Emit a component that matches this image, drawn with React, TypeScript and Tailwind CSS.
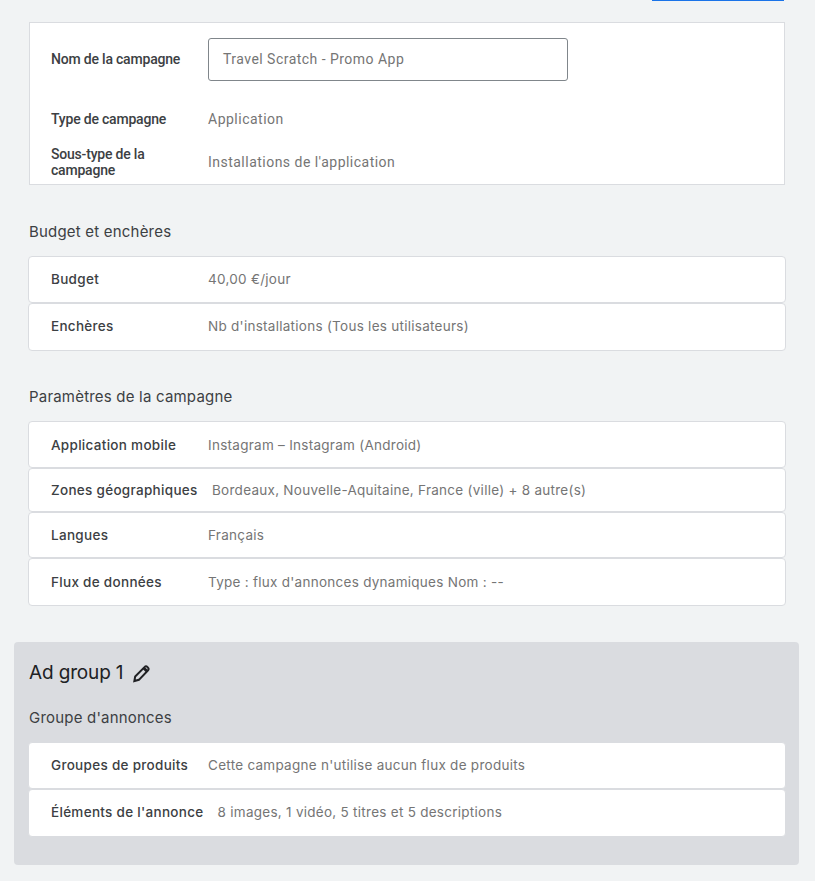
import { ReactNode } from 'react'

const sans = "font-['Inter',sans-serif]"

function Row({ label, value, rowClass, gap }: { label: string; value: string; rowClass: string; gap?: boolean }) {
  return (
    <div className={`flex items-center rounded-[4px] border border-[#dadce0] bg-white pl-[22px] ${rowClass}`}>
      <span className={`${gap ? '' : 'w-[157px]'} shrink-0 whitespace-nowrap text-[13.5px] font-medium tracking-[0.3px] text-[#3c4043]`}>
        {label}
      </span>
      <span className={`${gap ? 'ml-[14px]' : ''} whitespace-nowrap text-[13.5px] tracking-[0.27px] text-[#757575]`}>{value}</span>
    </div>
  )
}

function Section({ title, children }: { title: string; children: ReactNode }) {
  return (
    <section>
      <h2 className="h-[34px] pl-px text-[15px] leading-[20px] tracking-[0.2px] text-[#3c4043]">{title}</h2>
      <div className="flex flex-col">{children}</div>
    </section>
  )
}

export default function App() {
  return (
    <div className={`${sans} h-[881px] w-[815px] overflow-hidden bg-[#f1f3f4]`}>
      <div className="ml-[652px] h-[1px] w-[132px] bg-[#1a73e8]" />

      <div className="mx-[29px] mt-[21px] h-[163px] w-[756px] border border-[#dadce0] bg-white font-['Roboto',sans-serif]">
        <div className="flex items-center pl-[21px] pt-[15px]">
          <span className="w-[157px] text-[14px] font-medium tracking-[-0.2px] text-[#3c4043]">Nom de la campagne</span>
          <div className="flex h-[43px] w-[360px] items-center rounded-[3px] border border-[#80868b] pl-[14px] text-[14px] tracking-[0.47px] text-[#757575]">
            Travel Scratch - Promo App
          </div>
        </div>
        <div className="mt-[28px] flex items-center pl-[21px]">
          <span className="w-[157px] text-[14px] font-medium tracking-[-0.2px] text-[#3c4043]">Type de campagne</span>
          <span className="text-[14px] tracking-[0.5px] text-[#757575]">Application</span>
        </div>
        <div className="mt-[16px] flex items-center pl-[21px]">
          <span className="w-[157px] pr-[40px] text-[14px] font-medium leading-[16px] tracking-[-0.2px] text-[#3c4043]">
            Sous-type de la campagne
          </span>
          <span className="text-[14px] tracking-[0.48px] text-[#757575]">Installations de l'application</span>
        </div>
      </div>

      <div className="ml-[28px] mt-[37px] w-[758px]">
        <Section title="Budget et enchères">
          <Row label="Budget" value="40,00 €/jour" rowClass="h-[47px]" />
          <Row label="Enchères" value="Nb d'installations (Tous les utilisateurs)" rowClass="h-[48px] pb-px" />
        </Section>
      </div>

      <div className="ml-[28px] mt-[36px] w-[758px]">
        <Section title="Paramètres de la campagne">
          <Row label="Application mobile" value="Instagram – Instagram (Android)" rowClass="h-[47px] pt-px" />
          <div className="flex h-[44px] items-center rounded-[4px] border border-[#dadce0] bg-white pl-[22px]">
            <span className="w-[161px] shrink-0 whitespace-nowrap text-[13.5px] font-medium tracking-[0.3px] text-[#3c4043]">
              Zones géographiques
            </span>
            <span className="whitespace-nowrap text-[13.5px] tracking-[0.27px] text-[#757575]">
              Bordeaux, Nouvelle-Aquitaine, France (ville) + 8 autre(s)
            </span>
          </div>
          <Row label="Langues" value="Français" rowClass="h-[46px]" />
          <Row label="Flux de données" value="Type : flux d'annonces dynamiques Nom : --" rowClass="h-[48px]" />
        </Section>
      </div>

      <div className="ml-[14px] mt-[36px] h-[223px] w-[785px] rounded-[4px] bg-[#dadce0] pl-[14px] pr-[13px]">
        <div className="flex h-[61px] items-center pl-px pt-[2px]">
          <span className="text-[19px] tracking-[-0.15px] text-[#202124]">Ad group 1</span>
          <svg className="ml-[8px]" width="20" height="20" viewBox="0 0 24 24" fill="none" stroke="#202124" strokeWidth="2.4">
            <path d="M4 20.5l1-5.5L16.5 3.5a2 2 0 0 1 3 0l1 1a2 2 0 0 1 0 3L9.5 19z" />
            <path d="M14 6l2.5-2.5 4 4L18 10z" fill="#202124" stroke="none" />
          </svg>
        </div>
        <div className="mt-[5px]">
          <Section title="Groupe d'annonces">
            <Row label="Groupes de produits" value="Cette campagne n'utilise aucun flux de produits" rowClass="h-[47px]" />
            <Row label="Éléments de l'annonce" value="8 images, 1 vidéo, 5 titres et 5 descriptions" rowClass="h-[48px] pb-px" gap />
          </Section>
        </div>
      </div>
    </div>
  )
}
